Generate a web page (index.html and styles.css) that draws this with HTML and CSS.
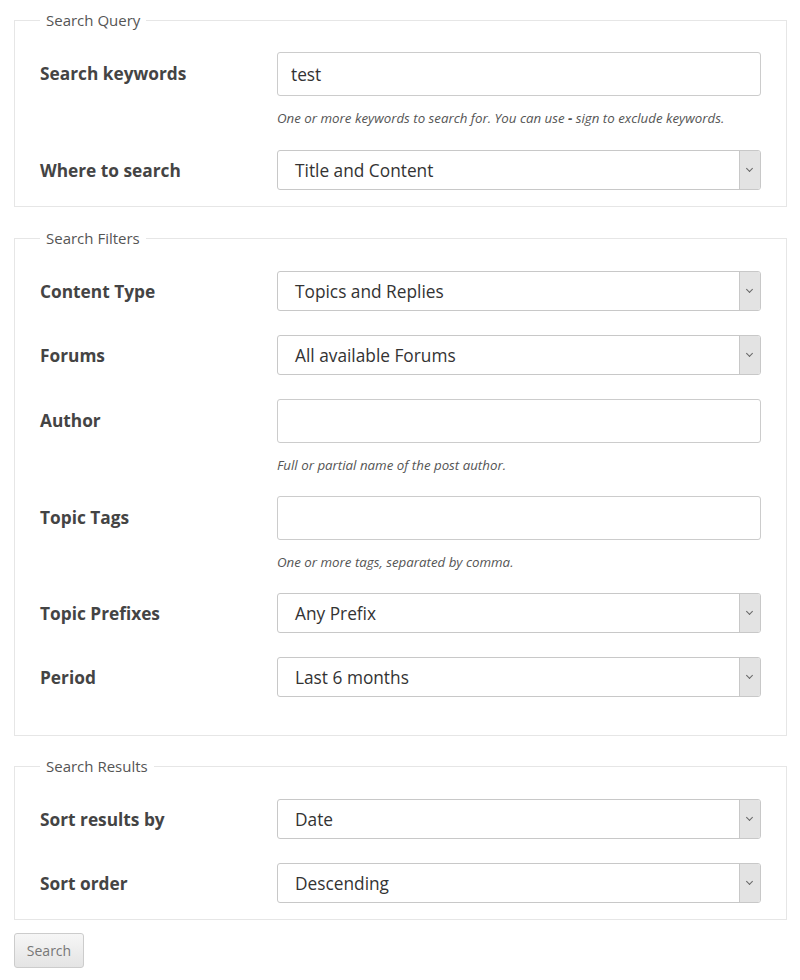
FILE: index.html
```html
<!DOCTYPE html>
<html lang="en">
<head>
    <meta charset="UTF-8">
    <meta name="viewport" content="width=device-width, initial-scale=1.0">
    <title>Advanced Search</title>
    <link rel="stylesheet" href="styles.css">
</head>
<body>

<form class="search-form">
    <fieldset class="search-group">
        <legend>Search Query</legend>
        <div class="field-row">
            <label class="field-label">Search keywords</label>
            <div class="field-control">
                <input type="text" class="text-input" value="test">
                <p class="field-help">One or more keywords to search for. You can use <b>-</b> sign to exclude keywords.</p>
            </div>
        </div>
        <div class="field-row">
            <label class="field-label">Where to search</label>
            <div class="field-control">
                <div class="select-box"><span>Title and Content</span><i class="select-arrow"></i></div>
            </div>
        </div>
    </fieldset>

    <fieldset class="search-group filters">
        <legend>Search Filters</legend>
        <div class="field-row">
            <label class="field-label">Content Type</label>
            <div class="field-control">
                <div class="select-box"><span>Topics and Replies</span><i class="select-arrow"></i></div>
            </div>
        </div>
        <div class="field-row">
            <label class="field-label">Forums</label>
            <div class="field-control">
                <div class="select-box"><span>All available Forums</span><i class="select-arrow"></i></div>
            </div>
        </div>
        <div class="field-row">
            <label class="field-label">Author</label>
            <div class="field-control">
                <input type="text" class="text-input">
                <p class="field-help">Full or partial name of the post author.</p>
            </div>
        </div>
        <div class="field-row">
            <label class="field-label">Topic Tags</label>
            <div class="field-control">
                <input type="text" class="text-input">
                <p class="field-help">One or more tags, separated by comma.</p>
            </div>
        </div>
        <div class="field-row">
            <label class="field-label">Topic Prefixes</label>
            <div class="field-control">
                <div class="select-box"><span>Any Prefix</span><i class="select-arrow"></i></div>
            </div>
        </div>
        <div class="field-row">
            <label class="field-label">Period</label>
            <div class="field-control">
                <div class="select-box"><span>Last 6 months</span><i class="select-arrow"></i></div>
            </div>
        </div>
    </fieldset>

    <fieldset class="search-group results">
        <legend>Search Results</legend>
        <div class="field-row">
            <label class="field-label">Sort results by</label>
            <div class="field-control">
                <div class="select-box"><span>Date</span><i class="select-arrow"></i></div>
            </div>
        </div>
        <div class="field-row">
            <label class="field-label">Sort order</label>
            <div class="field-control">
                <div class="select-box"><span>Descending</span><i class="select-arrow"></i></div>
            </div>
        </div>
    </fieldset>

    <button type="button" class="search-button">Search</button>
</form>

</body>
</html>
```

FILE: styles.css
```css
body {
    font-family: "Open Sans", sans-serif;
    margin: 0;
    color: #333;
    background: #fff;
}
.search-form {
    padding: 10px 13px 0 14px;
}
.search-group {
    margin: 0;
    padding: 22px 25px 16px 25px;
    border: 1px solid #e6e6e6;
    display: flex;
    flex-direction: column;
    gap: 24px;
}
.search-group + .search-group {
    margin-top: 21px;
}
.search-group.filters {
    padding-top: 23px;
    padding-bottom: 38px;
}
.search-group.filters .field-help {
    margin-bottom: -2px;
}
.search-group.results {
    margin-top: 20px;
    padding-top: 23px;
}
.search-group legend {
    font-size: 15px;
    line-height: 20px;
    color: #555;
    padding: 0 6px;
}
.field-row {
    display: grid;
    grid-template-columns: 237px 1fr;
    align-items: start;
}
.field-label {
    display: block;
    font-weight: bold;
    font-size: 17.3px;
    color: #444;
    line-height: 44px;
}
.field-row:has(.select-box) .field-label {
    height: 40px;
    line-height: 42px;
}
.text-input {
    display: block;
    box-sizing: border-box;
    width: 100%;
    height: 44px;
    border: 1px solid #ccc;
    border-radius: 3px;
    padding: 0 13px;
    font-family: "Open Sans", sans-serif;
    font-size: 17.3px;
    color: #333;
    outline: none;
}
.field-help {
    margin: 13px 0 -1px 0;
    font-size: 13.3px;
    line-height: 18px;
    font-style: italic;
    color: #555;
}
.select-box {
    display: flex;
    align-items: center;
    box-sizing: border-box;
    height: 40px;
    border: 1px solid #c8c8c8;
    border-radius: 3px;
    font-size: 17.3px;
    color: #333;
    overflow: hidden;
}
.select-box span {
    flex: 1;
    padding-left: 17px;
}
.select-arrow {
    width: 20px;
    align-self: stretch;
    background: #e3e3e3;
    border-left: 1px solid #c8c8c8;
    position: relative;
}
.select-arrow::after {
    content: "";
    position: absolute;
    left: 7px;
    top: 15px;
    width: 4px;
    height: 4px;
    border-right: 1px solid #666;
    border-bottom: 1px solid #666;
    transform: rotate(45deg);
}
.search-button {
    width: 70px;
    height: 35px;
    margin-top: 13px;
    font-family: "Open Sans", sans-serif;
    font-size: 14px;
    color: #777;
    background: linear-gradient(#f6f6f6, #e4e4e4);
    border: 1px solid #ccc;
    border-radius: 3px;
}
```
